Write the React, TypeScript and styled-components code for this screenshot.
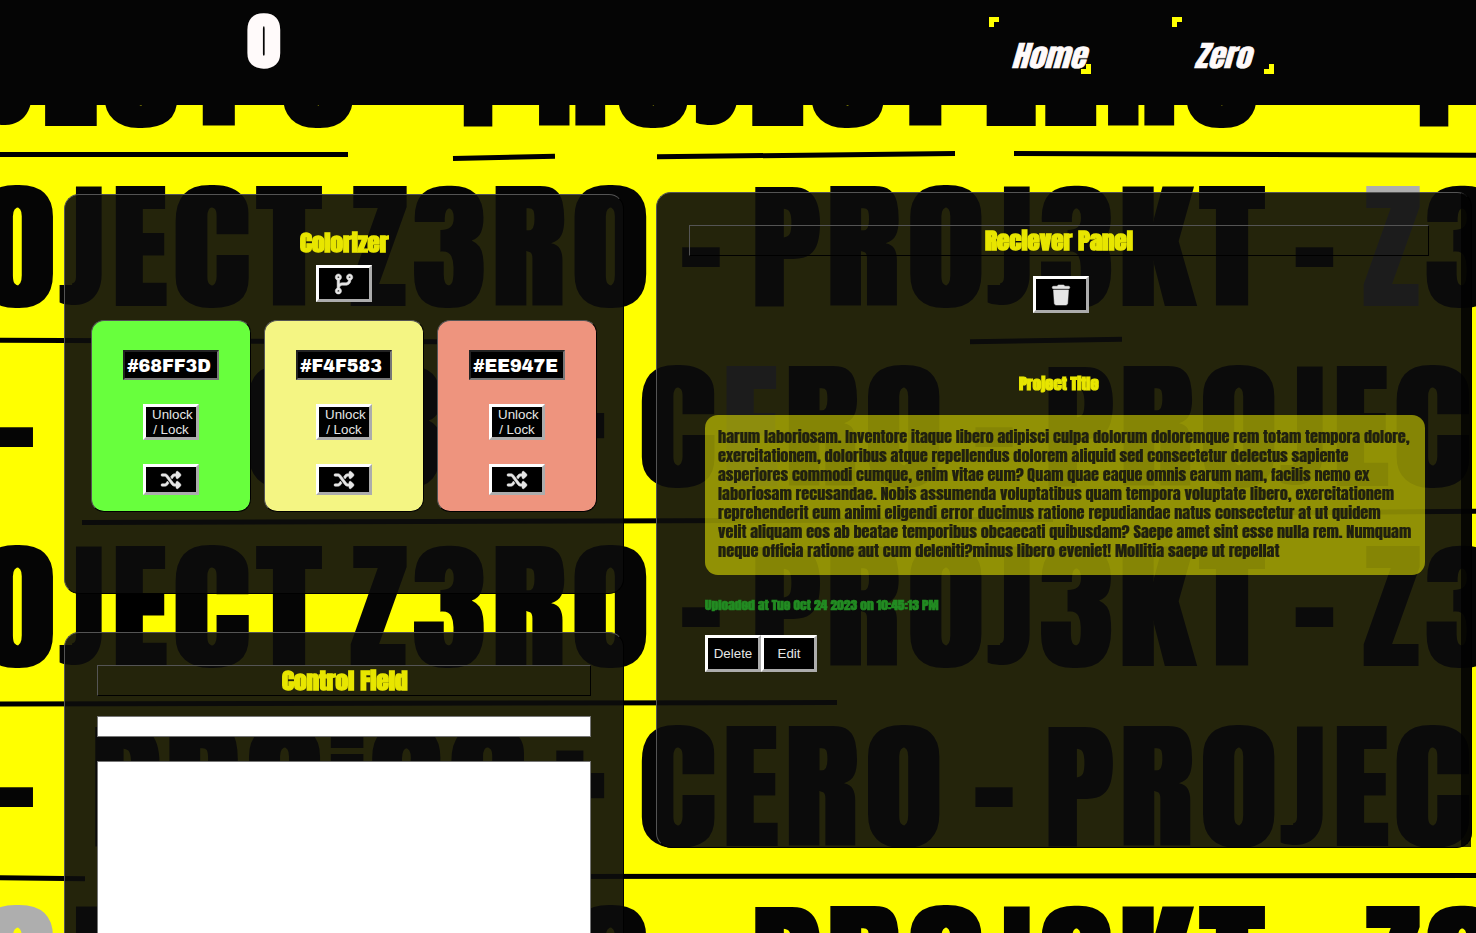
import React, { useLayoutEffect, useRef } from 'react';
import styled, { createGlobalStyle, css } from 'styled-components';
import { FaCodeBranch, FaShuffle, FaTrash } from 'react-icons/fa6';

const display = `Anton, Impact, "Roboto Condensed", sans-serif`;
const ui = `"Liberation Sans", Arial, sans-serif`;

const GlobalStyle = createGlobalStyle`
  *, *::before, *::after { box-sizing: border-box; }
  html, body { margin: 0; padding: 0; overflow: hidden; background: #ff0; }
  body { font-family: ${ui}; }
`;

/* ---------- poster backdrop ---------- */

type Glyph = [char: string, x0: number, x1: number, fill?: string];
type Row = { base: number; glyphs: Glyph[] };

const INK = '#050505';
const FADED = '#aeaeae';

const wordRow = (first = INK, e = INK, lastZ = INK): Glyph[] => [
  ['O', -18, 53.5, first], ['J', 60, 103], ['E', 115.3, 168, e], ['C', 176, 249.5], ['T', 254.8, 322.3],
  ['Z', 351, 408], ['3', 414, 484.6], ['R', 495, 564.5], ['O', 575, 647],
  ['-', 680.7, 719.7], ['P', 754.7, 821.5], ['R', 829.8, 899], ['O', 910.5, 982],
  ['J', 988, 1031], ['3', 1041, 1112], ['K', 1122, 1197.5], ['T', 1198, 1265.5],
  ['-', 1294.3, 1333.3], ['Z', 1364, 1421, lastZ], ['3', 1426.5, 1498],
];

const ceroRow = (e = INK): Glyph[] => [
  ['-', -6, 33], ['P', 94.7, 161], ['R', 168.7, 238], ['O', 249.3, 320.7], ['j', 325, 364],
  ['3', 371.5, 441.5], ['C', 451.7, 525], ['+', 535, 605.3],
  ['C', 642.3, 715.3], ['E', 726, 779, e], ['R', 788.3, 857.3], ['O', 868.3, 940], ['-', 974, 1012.7],
  ['P', 1048, 1114.5], ['R', 1123, 1192.3], ['O', 1203.3, 1275], ['J', 1281, 1324], ['E', 1336.3, 1389.5],
  ['C', 1397, 1470],
];

const topRow: Glyph[] = [
  ['J', -10, 33], ['E', 44.5, 98], ['C', 105, 178], ['T', 185, 252], ['O', 283, 354],
  ['P', 463.3, 530], ['R', 538.3, 607], ['O', 618, 689], ['J', 696.3, 739], ['E', 751.7, 804.5],
  ['C', 812, 884.5], ['T', 891.5, 958.5], ['Z', 987, 1037.8], ['E', 1044.7, 1097.5], ['R', 1107.3, 1176],
  ['O', 1186.3, 1257.5], ['P', 1419.3, 1486],
];

const rows: Row[] = [
  { base: 126, glyphs: topRow },
  { base: 306, glyphs: wordRow(INK, INK, FADED) },
  { base: 486, glyphs: ceroRow(FADED) },
  { base: 666, glyphs: wordRow(INK, '#000') },
  { base: 846, glyphs: ceroRow() },
  { base: 1026, glyphs: wordRow(FADED) },
];

const strokes: [number, number, number, number][] = [
  [-10, 154.5, 348, 154.5], [453, 158.5, 555, 156.3], [657, 156.8, 955, 153.5], [1014, 153.5, 1490, 155.2],
  [-10, 340.3, 440, 341.8], [970, 341.7, 1122, 339.3],
  [82, 522.5, 1053, 519.5], [1290, 512.8, 1490, 511],
  [-10, 704, 837, 702.5], [-10, 877.5, 85, 878.7], [540, 876.5, 1490, 875.6],
];

// Vertical ink extent of each glyph relative to its baseline: [above, below]
const extent = (c: string): [number, number] => {
  if ('OC3'.includes(c)) return [122, 3];
  if (c === '-') return [61.5, -37];
  if (c === '+') return [96, -23];
  if (c === 'j') return [118.5, 24];
  return [119, 0.2];
};

const ctx = document.createElement('canvas').getContext('2d')!;
const inkBox = (c: string) => {
  ctx.font = `400 1000px ${display}`;
  const m = ctx.measureText(c);
  return {
    l: -m.actualBoundingBoxLeft / 10,
    r: m.actualBoundingBoxRight / 10,
    t: -m.actualBoundingBoxAscent / 10,
    b: m.actualBoundingBoxDescent / 10,
  };
};

// Letters are drawn slightly narrow, then thickened sideways by this much
const SPREAD = 2;

const Letter = ({ glyph, base }: { glyph: Glyph; base: number }) => {
  const [c, from, to, fill = INK] = glyph;
  const k = inkBox(c);
  const [up, down] = extent(c);
  const hooked = c === 'J';
  const x0 = from + SPREAD - 0.4;
  const x1 = to - SPREAD + ('O3CR'.includes(c) ? 1.5 : c === '-' ? 0 : 0.4);
  const left = hooked ? x0 - 15 : x0;
  const sx = (x1 - left) / (k.r - k.l);
  const sy = (up + down) / (k.b - k.t);
  const id = `hook-${from}-${base}`.replace(/[.]/g, '_');
  const tx = left - k.l * sx;
  const ty = base - up - k.t * sy;
  return (
    <g clipPath={hooked ? `url(#${id})` : undefined}>
      {hooked && (
        <clipPath id={id}>
          <path d={`M${x0} ${base - 21}H${x0 + 12.5}V${base - 125}H${x1 + 4}V${base + 4}H${x0}Z`} />
        </clipPath>
      )}
      <text fill={fill} transform={`matrix(${sx} 0 0 ${sy} ${tx} ${ty})`}>{c}</text>
    </g>
  );
};

const Backdrop = styled.svg`
  position: absolute;
  inset: 0;
  z-index: -1;
  font: 400 100px ${display};
`;

const Poster = () => (
  <Backdrop width="1476" height="933" viewBox="0 0 1476 933" aria-hidden>
    <filter
      id="spread"
      filterUnits="userSpaceOnUse"
      colorInterpolationFilters="sRGB"
      x="-30"
      y="0"
      width="1540"
      height="960"
    >
      <feMorphology operator="dilate" radius={`${SPREAD} 0`} />
    </filter>
    <g filter="url(#spread)">
      {rows.map(row => row.glyphs.map(g => <Letter key={`${row.base}:${g[1]}`} glyph={g} base={row.base} />))}
    </g>
    {strokes.map(([x1, y1, x2, y2]) => (
      <line key={`${x1}:${y1}`} x1={x1} y1={y1} x2={x2} y2={y2} stroke="#000" strokeWidth={5} />
    ))}
  </Backdrop>
);

/* ---------- text stretched to a given measure ---------- */

const FitBox = styled.span<{ $w: number }>`
  display: block;
  width: ${p => p.$w}px;
  white-space: nowrap;
`;
const FitInner = styled.span`
  display: inline-block;
  transform-origin: 0 50%;
`;
const Fit = ({ width, children }: { width: number; children: string }) => {
  const ref = useRef<HTMLSpanElement>(null);
  useLayoutEffect(() => {
    const el = ref.current!;
    el.style.transform = `scaleX(${width / el.offsetWidth})`;
  }, [width, children]);
  return <FitBox $w={width}><FitInner ref={ref}>{children}</FitInner></FitBox>;
};

/* ---------- page ---------- */

const Page = styled.div`
  position: relative;
  z-index: 0;
  width: 1476px;
  height: 933px;
  overflow: hidden;
`;

const Header = styled.header`
  display: flex;
  justify-content: space-between;
  height: 105px;
  padding: 0 202px 0 248px;
  background: ${INK};
`;

const Logo = styled.div`
  font: 400 60px/84px ${display};
  color: snow;
  -webkit-text-stroke: 3.4px snow;
`;

const Nav = styled.nav`
  display: flex;
  gap: 81px;
  padding-top: 17px;
`;

const corner = css`
  content: '';
  position: absolute;
  width: 10px;
  height: 10px;
  background: #ff0;
`;

const NavLink = styled.a`
  position: relative;
  width: 102px;
  height: 57px;
  padding: 17px 0 0 22px;
  font: italic 400 29px/44px ${display};
  color: snow;
  -webkit-text-stroke: 0.6px snow;
  &::before {
    ${corner}
    top: 0;
    left: 0;
    clip-path: polygon(0 0, 100% 0, 100% 50%, 50% 50%, 50% 100%, 0 100%);
  }
  &::after {
    ${corner}
    right: 0;
    bottom: 0;
    clip-path: polygon(50% 0, 100% 0, 100% 100%, 0 100%, 0 50%, 50% 50%);
  }
`;

const Main = styled.main`
  display: flex;
  align-items: flex-start;
  gap: 32px;
  padding: 87px 0 0 64px;
`;

const LeftColumn = styled.div`
  display: flex;
  flex-direction: column;
  gap: 38px;
  width: 560px;
  padding-top: 2px;
`;

const bevel = css`
  border: 1px solid;
  border-color: #545454 #000 #000 #545454;
`;

const Panel = styled.section<{ $h: number }>`
  ${bevel}
  display: flex;
  flex-direction: column;
  align-items: center;
  height: ${p => p.$h}px;
  padding: 32px;
  border-radius: 15px;
  background: rgba(12, 12, 12, 0.9);
`;

const ColorPanel = styled(Panel)`
  padding: 33px 25px;
`;

const Receiver = styled(Panel)`
  position: relative;
  width: 816px;
  padding-right: 42px;
`;

const ScrollTrack = styled.div`
  position: absolute;
  top: 0;
  right: 0;
  bottom: 0;
  width: 10px;
  border-top-right-radius: 12px;
  background: rgba(0, 0, 0, 0.8);
`;

const Title = styled.h2`
  display: flex;
  justify-content: center;
  margin: 0;
  font: 400 22px/29px ${display};
  color: #e8e600;
  -webkit-text-stroke: 1.3px #e8e600;
`;

const FramedTitle = styled(Title)`
  ${bevel}
  width: 100%;
`;

const Button = styled.button<{ $h?: number }>`
  display: block;
  flex: none;
  width: 56px;
  height: ${p => p.$h ?? 37}px;
  padding: 0 6px;
  border: 3px solid;
  border-color: #fff #acacac #acacac #fff;
  background: #000;
  color: #e6e6e6;
  font: 13.333px/15px ${ui};
  text-align: center;
  svg {
    display: block;
    margin: 0 auto;
    font-size: 20px;
    overflow: visible;
    stroke: currentColor;
    stroke-width: 13px;
  }
`;

const ForkButton = styled(Button)`
  margin: 8px 0 18px;
`;

const TrashButton = styled(Button)`
  margin: 20px 0 0 4px;
`;

const Swatches = styled.div`
  display: flex;
  gap: 13px;
`;

const Swatch = styled.div<{ $color: string }>`
  ${bevel}
  display: flex;
  flex-direction: column;
  align-items: center;
  gap: 24px;
  width: 160px;
  height: 192px;
  padding-top: 29px;
  border-radius: 13px;
  background: ${p => p.$color};
`;

const HexField = styled.div`
  width: 96px;
  height: 30px;
  padding-left: 2px;
  border: 2px solid;
  border-color: #222 #777 #777 #222;
  background: #000;
  color: #fff;
  font: 400 17.6px/29px "Archivo Black", ${ui};
`;

const TextInput = styled.input`
  flex: none;
  width: 100%;
  height: 21px;
  margin: 20px 0 24px;
  border: 1px solid #767676;
  background: #fff;
`;

const TextArea = styled.textarea`
  flex: none;
  width: 100%;
  height: 330px;
  border: 1px solid #767676;
  background: #fff;
  resize: none;
`;

const Project = styled.article`
  width: 720px;
  margin: 59px 0 0 12px;
`;

const ProjectTitle = styled(Title)`
  margin-right: 12px;
  font-size: 15px;
  line-height: 24px;
  -webkit-text-stroke-width: 1.1px;
`;

const Description = styled.p`
  height: 160px;
  margin: 19px 0 0;
  padding: 12px 13px;
  border-radius: 13px;
  background: rgba(255, 255, 0, 0.5);
  color: #20200f;
  font: 400 15px/19px ${display};
  -webkit-text-stroke: 0.2px #20200f;
`;

const Uploaded = styled.div`
  margin-top: 20px;
  font: 400 12.5px/20px ${display};
  color: #228b22;
  -webkit-text-stroke: 0.7px #228b22;
`;

const Actions = styled.div`
  display: flex;
  margin-top: 20px;
`;

const TextButton = styled(Button)`
  padding: 0;
`;

const swatches = [
  { hex: '#68FF3D', color: '#68ff3d' },
  { hex: '#F4F583', color: '#f4f583' },
  { hex: '#EE947E', color: '#ee947e' },
];

const lines: [string, number][] = [
  ['harum laboriosam. Inventore itaque libero adipisci culpa dolorum doloremque rem totam tempora dolore,', 692],
  ['exercitationem, doloribus atque repellendus dolorem aliquid sed consectetur delectus sapiente', 631],
  ['asperiores commodi cumque, enim vitae eum? Quam quae eaque omnis earum nam, facilis nemo ex', 652],
  ['laboriosam recusandae. Nobis assumenda voluptatibus quam tempora voluptate libero, exercitationem', 676],
  ['reprehenderit eum animi eligendi error ducimus ratione repudiandae natus consectetur at ut quidem', 663],
  ['velit aliquam eos ab beatae temporibus obcaecati quibusdam? Saepe amet sint esse nulla rem. Numquam', 693],
  ['neque officia ratione aut cum deleniti?minus libero eveniet! Mollitia saepe ut repellat', 561.5],
];

export default function App() {
  return (
    <Page>
      <GlobalStyle />
      <Poster />
      <Header>
        <Logo><Fit width={32}>0</Fit></Logo>
        <Nav>
          <NavLink><Fit width={74}>Home</Fit></NavLink>
          <NavLink><Fit width={57}>Zero</Fit></NavLink>
        </Nav>
      </Header>
      <Main>
        <LeftColumn>
          <ColorPanel $h={400}>
            <Title><Fit width={89}>Colorizer</Fit></Title>
            <ForkButton><FaCodeBranch /></ForkButton>
            <Swatches>
              {swatches.map(s => (
                <Swatch key={s.hex} $color={s.color}>
                  <HexField>{s.hex}</HexField>
                  <Button $h={36}>Unlock / Lock</Button>
                  <Button $h={31}><FaShuffle /></Button>
                </Swatch>
              ))}
            </Swatches>
          </ColorPanel>
          <Panel $h={500}>
            <FramedTitle><Fit width={125}>Control Field</Fit></FramedTitle>
            <TextInput />
            <TextArea />
          </Panel>
        </LeftColumn>
        <Receiver $h={656}>
          <FramedTitle><Fit width={148}>Reciever Panel</Fit></FramedTitle>
          <TrashButton><FaTrash /></TrashButton>
          <Project>
            <ProjectTitle as="h3"><Fit width={80}>Project Title</Fit></ProjectTitle>
            <Description>
              {lines.map(([text, width]) => <Fit key={text} width={width}>{text}</Fit>)}
            </Description>
            <Uploaded><Fit width={233}>Uploaded at Tue Oct 24 2023 on 10:45:13 PM</Fit></Uploaded>
            <Actions>
              <TextButton>Delete</TextButton>
              <TextButton>Edit</TextButton>
            </Actions>
          </Project>
          <ScrollTrack />
        </Receiver>
      </Main>
    </Page>
  );
}
